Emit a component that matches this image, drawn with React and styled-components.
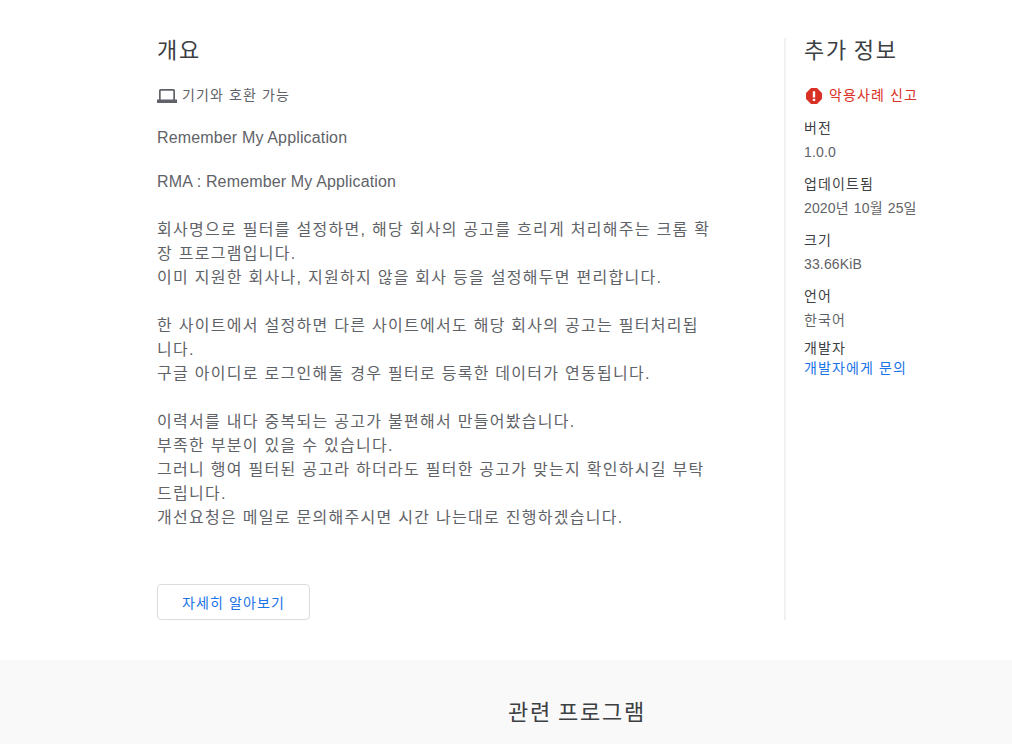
import React from "react";
import styled, { createGlobalStyle, css } from "styled-components";

const FONT = `"Liberation Sans", "Noto Sans CJK KR", sans-serif`;

// hangul in the reference sits on a full em, the CJK font here is narrower
const hangul = css`
  letter-spacing: 0.08em;
`;

const GlobalStyle = createGlobalStyle`
  html, body {
    margin: 0;
    padding: 0;
    background: #fff;
    overflow: hidden;
  }

  body {
    font-family: ${FONT};
    color: #5f6368;
  }
`;

const LaptopIcon = () => (
  <LaptopSvg width="20" height="14" viewBox="0 0 20 14" fill="#5f6368">
    <path d="M3.500 0h13A1.500 1.500 0 0 1 18 1.500V10.500H20V14H0V10.500H2V1.500A1.500 1.500 0 0 1 3.500 0zM3.700 1.700V10.500H16.300V1.700H3.700z" fillRule="evenodd" />
  </LaptopSvg>
);

const ReportIcon = () => (
  <ReportSvg width="16" height="16" viewBox="0 0 16 16">
    <path
      fill="#d93025"
      stroke="#d93025"
      strokeWidth="1.500"
      strokeLinejoin="round"
      d="M5.300.8h5.400l4.500 4.500v5.400l-4.500 4.500H5.300L.8 10.700V5.300z"
    />
    <rect x="6.800" y="3.200" width="2.400" height="6.400" rx="0.400" fill="#fff" />
    <rect x="6.800" y="10.700" width="2.400" height="2.300" rx="0.400" fill="#fff" />
  </ReportSvg>
);

const details = [
  { label: "버전", value: "1.0.0" },
  { label: "업데이트됨", value: <>2020<Ko>년</Ko> 10<Ko>월</Ko> 25<Ko>일</Ko></> },
  { label: "크기", value: "33.66KiB" },
  { label: "언어", value: <Ko>한국어</Ko> },
];

const App = () => {
  return (
    <Page>
      <GlobalStyle />
      <Overview>
        <Main>
          <Title>개요</Title>
          <Compat>
            <LaptopIcon />
            <span>기기와 호환 가능</span>
          </Compat>
          <Description>
            <Lead>Remember My Application</Lead>
            <Para>RMA : Remember My Application</Para>
            <Para $ko>
              회사명으로 필터를 설정하면, 해당 회사의 공고를 흐리게 처리해주는 크롬 확장 프로그램입니다.
              <br />
              이미 지원한 회사나, 지원하지 않을 회사 등을 설정해두면 편리합니다.
            </Para>
            <Para $ko>
              한 사이트에서 설정하면 다른 사이트에서도 해당 회사의 공고는 필터처리됩니다.
              <br />
              구글 아이디로 로그인해둘 경우 필터로 등록한 데이터가 연동됩니다.
            </Para>
            <Para $ko>
              이력서를 내다 중복되는 공고가 불편해서 만들어봤습니다.
              <br />
              부족한 부분이 있을 수 있습니다.
              <br />
              그러니 행여 필터된 공고라 하더라도 필터한 공고가 맞는지 확인하시길 부탁드립니다.
              <br />
              개선요청은 메일로 문의해주시면 시간 나는대로 진행하겠습니다.
            </Para>
          </Description>
          <MoreButton>자세히 알아보기</MoreButton>
        </Main>

        <Side>
          <Title>추가 정보</Title>
          <Report>
            <ReportIcon />
            <span>악용사례 신고</span>
          </Report>
          {details.map((d) => (
            <Detail key={d.label}>
              <DetailLabel>{d.label}</DetailLabel>
              <DetailValue>{d.value}</DetailValue>
            </Detail>
          ))}
          <Developer>
            <DetailLabel>개발자</DetailLabel>
            <DevLink>개발자에게 문의</DevLink>
          </Developer>
        </Side>
      </Overview>

      <Related>
        <RelatedTitle>관련 프로그램</RelatedTitle>
      </Related>
    </Page>
  );
};

export default App;

function Ko({ children }) {
  return <KoText>{children}</KoText>;
}

const KoText = styled.span`
  ${hangul}
`;

const LaptopSvg = styled.svg`
  margin-top: 3px;
  flex-shrink: 0;
`;

const ReportSvg = styled.svg`
  margin-top: 3px;
  flex-shrink: 0;
`;

const Page = styled.div`
  width: 1012px;
  height: 744px;
  overflow: hidden;
`;

const Overview = styled.section`
  display: flex;
  height: 660px;
  box-sizing: border-box;
  padding: 38px 0 40px 157px;
`;

const Main = styled.div`
  width: 555px;
  margin-right: 72px;
  flex-shrink: 0;
`;

const Title = styled.h2`
  ${hangul}
  margin: 0;
  font-size: 22px;
  font-weight: 400;
  line-height: 26px;
  word-spacing: -2px;
  color: #3c4043;
`;

const Compat = styled.div`
  ${hangul}
  display: flex;
  align-items: center;
  gap: 5px;
  margin-top: 18px;
  height: 24px;
  font-size: 14px;
  color: #5f6368;
`;

const Description = styled.div`
  margin-top: 20px;
  font-size: 16px;
  line-height: 24px;
  color: #5f6368;
`;

const Lead = styled.p`
  margin: 0 0 20px;
  letter-spacing: 0.15px;
`;

const Para = styled.p`
  letter-spacing: 0.15px;
  ${(p) => p.$ko && hangul}
  margin: 0 0 24px;
`;

const MoreButton = styled.button`
  ${hangul}
  display: block;
  width: 153px;
  height: 36px;
  margin-top: 54px;
  padding: 0;
  background: #fff;
  border: 1px solid #dadce0;
  border-radius: 4px;
  font-family: ${FONT};
  font-size: 14px;
  color: #1a73e8;
`;

const Side = styled.aside`
  flex: 1;
  padding-left: 18px;
  border-left: 2px solid #f1f1f1;
`;

const Report = styled.div`
  ${hangul}
  display: flex;
  align-items: center;
  gap: 7px;
  margin-top: 18px;
  padding-left: 2px;
  height: 24px;
  font-size: 14px;
  color: #d93025;
`;

const Detail = styled.div`
  margin-top: 12px;
`;

const DetailLabel = styled.div`
  ${hangul}
  font-size: 14px;
  line-height: 20px;
  color: #3c4043;
`;

const DetailValue = styled.div`
  margin-top: 4px;
  font-size: 14px;
  line-height: 20px;
  letter-spacing: 0.15px;
  color: #5f6368;
`;

const Developer = styled.div`
  margin-top: 8px;
`;

const DevLink = styled.div`
  ${hangul}
  font-size: 14px;
  line-height: 20px;
  color: #1a73e8;
`;

const Related = styled.section`
  height: 84px;
  background: #f9f9f9;
  padding: 38px 0 0 142px;
  box-sizing: border-box;
`;

const RelatedTitle = styled.h2`
  ${hangul}
  margin: 0;
  text-align: center;
  font-size: 22px;
  font-weight: 400;
  line-height: 30px;
  word-spacing: -2px;
  color: #3c4043;
`;
